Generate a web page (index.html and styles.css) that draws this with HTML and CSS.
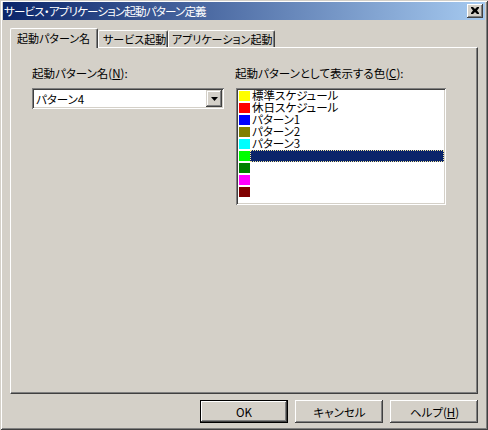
FILE: index.html
```html
<!DOCTYPE html>
<html lang="ja">
<head>
<meta charset="utf-8">
<link rel="stylesheet" href="styles.css">
</head>
<body>
<div class="window">
  <div class="titlebar">
    <span class="title">サービス・アプリケーション起動パターン定義</span>
    <span class="close"><svg width="8" height="7" viewBox="0 0 8 7"><path d="M0 0h2l2 2l2-2h2v1l-2 2.5l2 2.5v1h-2l-2-2l-2 2h-2v-1l2-2.5l-2-2.5z" fill="#000"/></svg></span>
  </div>
  <div class="client">
    <div class="tabs">
      <div class="tab active">起動パターン名</div>
      <div class="tab t2">サービス起動</div>
      <div class="tab t3">アプリケーション起動</div>
    </div>
    <div class="panel">
      <div class="field left">
        <div class="label">起動パターン名(<u>N</u>):</div>
        <div class="combo">
          <span class="combo-text">パターン4</span>
          <span class="combo-btn"><svg width="7" height="4" viewBox="0 0 7 4"><path d="M0 0h7l-3.5 4z" fill="#000"/></svg></span>
        </div>
      </div>
      <div class="field right">
        <div class="label">起動パターンとして表示する色(<u>C</u>):</div>
        <div class="listbox">
          <div class="row"><span class="sw yellow"></span><span class="txt">標準スケジュール</span></div>
          <div class="row"><span class="sw red"></span><span class="txt">休日スケジュール</span></div>
          <div class="row"><span class="sw blue"></span><span class="txt">パターン1</span></div>
          <div class="row"><span class="sw olive"></span><span class="txt">パターン2</span></div>
          <div class="row"><span class="sw cyan"></span><span class="txt">パターン3</span></div>
          <div class="row"><span class="sw lime"></span><span class="txt sel"></span></div>
          <div class="row"><span class="sw green"></span><span class="txt"></span></div>
          <div class="row"><span class="sw magenta"></span><span class="txt"></span></div>
          <div class="row"><span class="sw maroon"></span><span class="txt"></span></div>
        </div>
      </div>
    </div>
    <div class="buttons">
      <div class="btn default"><span class="btn-in">OK</span></div>
      <div class="btn"><span class="btn-in">キャンセル</span></div>
      <div class="btn"><span class="btn-in">ヘルプ(<u>H</u>)</span></div>
    </div>
  </div>
</div>
</body>
</html>
```

FILE: styles.css
```css
html, body {
  margin: 0;
  padding: 0;
  background: #d4d0c8;
}
body {
  font-family: "Noto Sans CJK JP", "Noto Sans", sans-serif;
  font-size: 11.5px;
  font-feature-settings: "palt";
  color: #000;
}
u { text-decoration: underline; text-underline-offset: 1px; }

.window {
  width: 488px;
  height: 430px;
  box-sizing: border-box;
  padding: 2px 3px 3px 3px;
  background: #d4d0c8;
  box-shadow: inset 1px 1px #d4d0c8, inset -1px -1px #404040, inset 2px 2px #ffffff, inset -2px -2px #808080;
  display: flex;
  flex-direction: column;
}

.titlebar {
  height: 18px;
  background: linear-gradient(to right, #0a246a, #a6caf0);
  display: flex;
  align-items: center;
  justify-content: space-between;
}
.title {
  color: #fff;
  font-size: 11.5px;
  letter-spacing: -0.8px;
  line-height: 18px;
  padding-left: 1px;
}
.close {
  width: 16px;
  height: 14px;
  margin-right: 2px;
  box-sizing: border-box;
  background: #d4d0c8;
  box-shadow: inset -1px -1px #404040, inset 1px 1px #ffffff, inset -2px -2px #808080;
  display: flex;
  align-items: center;
  justify-content: center;
  padding-bottom: 1px;
}

.client {
  flex: 1;
  display: flex;
  flex-direction: column;
  padding: 8px 7px 0 7px;
}

.tabs {
  display: flex;
  height: 19px;
  align-items: flex-end;
  position: relative;
  z-index: 1;
}
.tab {
  flex-shrink: 0;
  box-sizing: border-box;
  height: 17px;
  border-top: 1px solid #fff;
  border-left: 1px solid #fff;
  border-right: 1px solid #404040;
  border-radius: 2px 2px 0 0;
  box-shadow: inset -1px 0 #808080;
  background: #d4d0c8;
  font-size: 11px;
  line-height: 15px;
  padding-top: 1px;
  white-space: nowrap;
}
.tab.active {
  height: 20px;
  width: 88px;
  margin-bottom: -1px;
  padding-left: 6px;
  padding-top: 2px;
}
.tab.t2 {
  width: 70px;
  padding-left: 4px;
}
.tab.t3 {
  width: 107px;
  padding-left: 3px;
}

.panel {
  box-sizing: border-box;
  height: 347px;
  border-top: 1px solid #fff;
  border-left: 1px solid #fff;
  border-right: 1px solid #404040;
  border-bottom: 1px solid #404040;
  box-shadow: inset -1px -1px #808080;
  display: flex;
  gap: 12px;
  padding: 19px 0 0 21px;
}

.field {
  display: flex;
  flex-direction: column;
}
.field.left { width: 192px; }
.field.right { width: 210px; }
.label {
  line-height: 12px;
  height: 12px;
  white-space: nowrap;
  margin-bottom: 9px;
}
.field.right .label { margin-left: -1px; }

.combo {
  box-sizing: border-box;
  height: 21px;
  background: #fff;
  box-shadow: inset 1px 1px #808080, inset -1px -1px #ffffff, inset 2px 2px #404040, inset -2px -2px #d4d0c8;
  display: flex;
  align-items: center;
  padding: 2px;
}
.combo-text {
  flex: 1;
  padding-left: 2px;
  line-height: 12px;
}
.combo-btn {
  width: 16px;
  height: 17px;
  box-sizing: border-box;
  background: #d4d0c8;
  box-shadow: inset -1px -1px #404040, inset 1px 1px #d4d0c8, inset -2px -2px #808080, inset 2px 2px #ffffff;
  display: flex;
  align-items: center;
  justify-content: center;
}

.listbox {
  box-sizing: border-box;
  height: 117px;
  background: #fff;
  box-shadow: inset 1px 1px #808080, inset -1px -1px #ffffff, inset 2px 2px #404040, inset -2px -2px #d4d0c8;
  padding: 2px;
  display: flex;
  flex-direction: column;
}
.row {
  display: flex;
  height: 12px;
  align-items: center;
}
.sw {
  width: 11px;
  height: 10px;
  margin-left: 1px;
}
.txt {
  flex: 1;
  height: 12px;
  line-height: 11px;
  padding-left: 2px;
  white-space: nowrap;
}
.txt.sel {
  background: #0a246a;
  outline: 1px dotted #f3e7a0;
  outline-offset: -1px;
}
.yellow { background: #ffff00; }
.red { background: #ff0000; }
.blue { background: #0000ff; }
.olive { background: #808000; }
.cyan { background: #00ffff; }
.lime { background: #00ff00; }
.green { background: #008000; }
.magenta { background: #ff00ff; }
.maroon { background: #800000; }

.buttons {
  display: flex;
  justify-content: flex-end;
  gap: 7px;
  margin-top: 6px;
}
.btn {
  box-sizing: border-box;
  width: 88px;
  height: 23px;
  background: #d4d0c8;
  box-shadow: inset -1px -1px #404040, inset 1px 1px #ffffff, inset -2px -2px #808080;
  display: flex;
}
.btn.default {
  border: 1px solid #000;
}
.btn-in {
  flex: 1;
  display: flex;
  align-items: center;
  justify-content: center;
  line-height: 12px;
}
.btn.default .btn-in {
  box-shadow: inset -1px -1px #404040, inset 1px 1px #ffffff, inset -2px -2px #808080;
}
.btn:not(.default) .btn-in { padding-left: 1px; }
```
